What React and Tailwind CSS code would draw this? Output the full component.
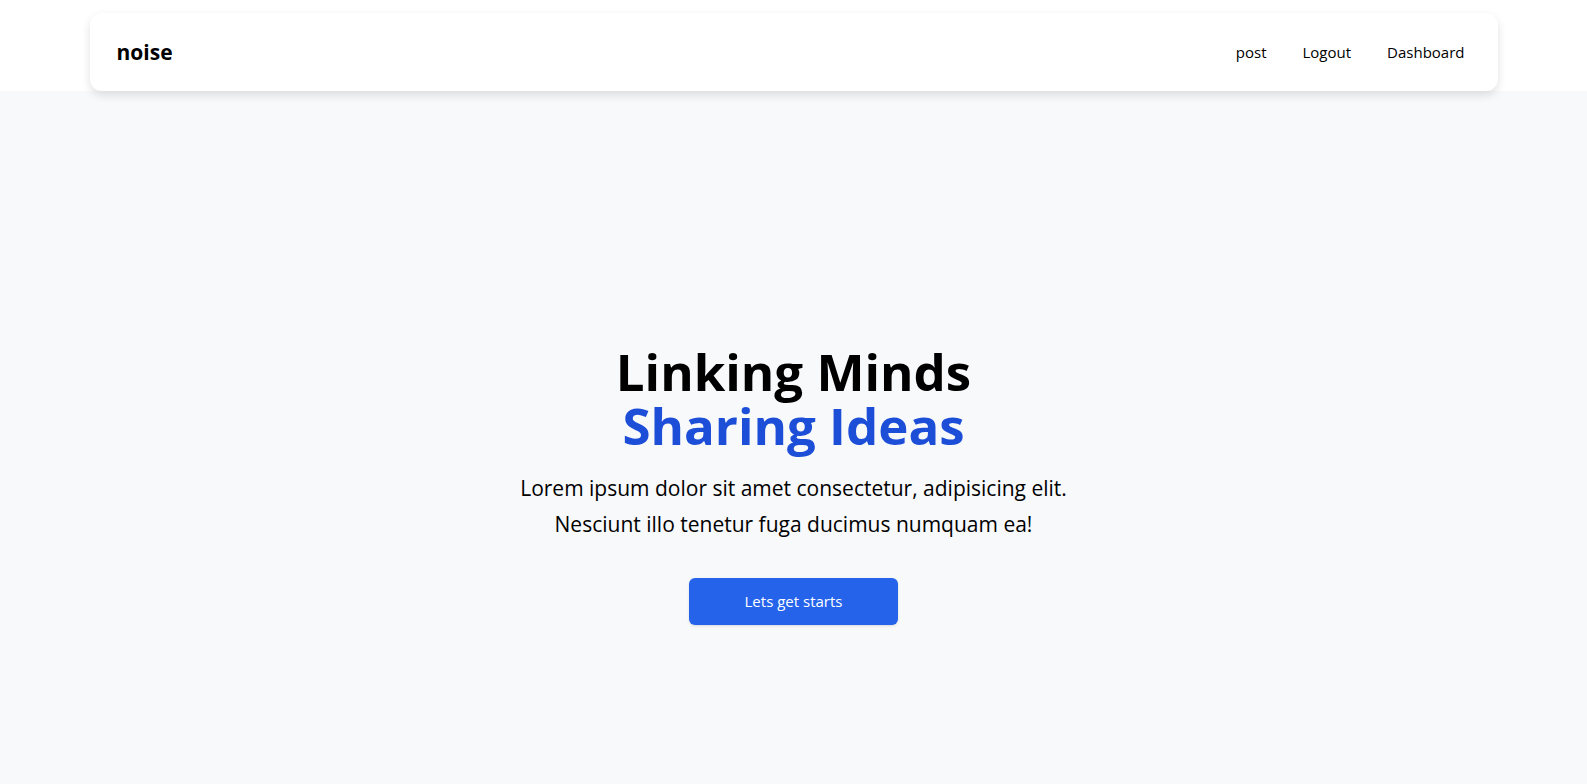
import React from 'react';

const font = { fontFamily: '"Open Sans", "Noto Sans", sans-serif' };

function Navbar() {
    return (
        <header className="bg-white pt-[13px]">
            <nav className="mx-auto flex h-[78px] w-[1408px] items-center justify-between rounded-xl bg-white pl-[27px] pr-[33px] shadow-[0_4px_10px_rgba(0,0,0,0.12)]">
                <a className="pt-[2px] text-[21px] font-bold text-black">noise</a>
                <ul className="flex items-center gap-[36px] text-[15px] font-medium text-black">
                    <li>post</li>
                    <li>Logout</li>
                    <li>Dashboard</li>
                </ul>
            </nav>
        </header>
    );
}

export default function App() {
    return (
        <div style={font} className="min-h-screen bg-[#f8f9fb]">
            <Navbar />
            <main className="flex flex-col items-center pt-[253px] pb-[150px] text-center">
                <h1 className="text-[51px] font-bold leading-[54px] text-black">
                    Linking Minds
                    <br />
                    <span className="text-[#1d4ed8]">Sharing Ideas</span>
                </h1>
                <p className="mt-[18px] text-[21px] leading-[36px] text-black">
                    Lorem ipsum dolor sit amet consectetur, adipisicing elit.
                    <br />
                    Nesciunt illo tenetur fuga ducimus numquam ea!
                </p>
                <button className="mt-[36px] h-[47px] w-[209px] rounded-md bg-[#2563eb] text-[15px] font-medium text-white shadow-sm">
                    Lets get starts
                </button>
            </main>
        </div>
    );
}
